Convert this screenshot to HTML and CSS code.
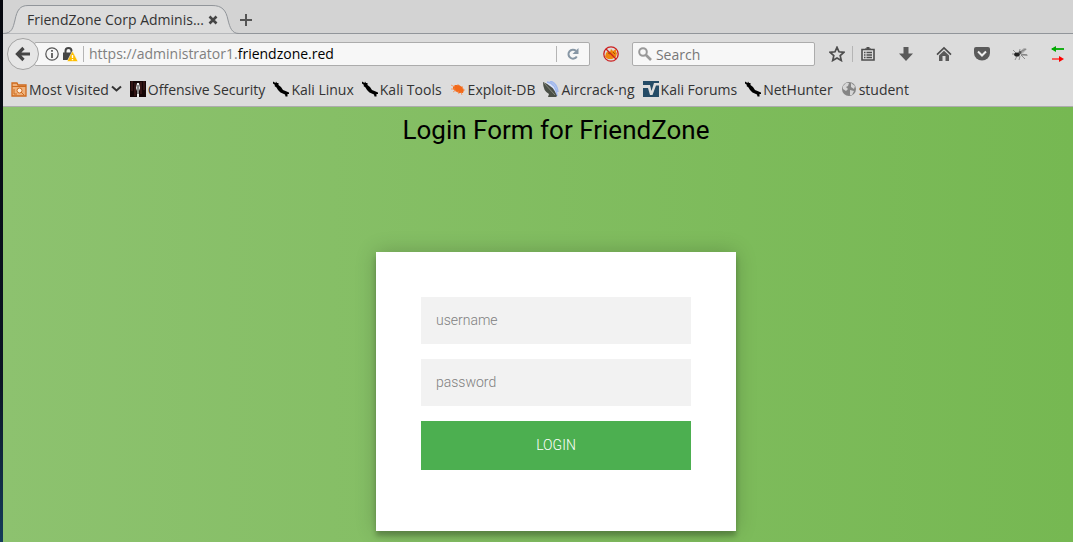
FILE: index.html
```html
<!DOCTYPE html>
<html lang="en">
<head>
    <title>FriendZone Corp Administration</title>
    <meta charset="UTF-8">
    <meta name="viewport" content="width=device-width, initial-scale=1.0">
    <link rel="stylesheet" href="styles.css">
</head>
<body>
    <svg class="defs" width="0" height="0" aria-hidden="true">
        <symbol id="kali" viewBox="0 0 16 16">
            <path d="M0 .5l2.500 1.500L3 .5 4 2l1.500 0v2L8 6l2 3 2.500 1 3.500 1.500.5 1.500-2 0 0 2.500-2 0-.5-2L7.500 11.500 5 9 3.500 6.500 1.500 5 2 4 0 2.500z" fill="#000"/>
        </symbol>
    </svg>
    <div class="browser">
        <header class="tab-bar">
            <div class="tab">
                <svg class="tab-shape" viewBox="0 0 236 29" preserveAspectRatio="none" aria-hidden="true">
                    <path d="M0 28.5C9 28.5 10 23 12 15C14 5 17 .5 25 .5H209C219 .5 223 5 225 15C227 23 229 28.5 236 28.5" fill="#dcdcdc" stroke="#91959a"/>
                </svg>
                <span class="tab-title">FriendZone Corp Adminis...</span>
                <button class="icon-btn tab-close" type="button" aria-label="Close tab">
                    <svg width="10" height="10" viewBox="0 0 10 10"><path d="M1.500 1.500l7 7M8.500 1.500l-7 7" stroke="#454545" stroke-width="2.600"/></svg>
                </button>
            </div>
            <button class="icon-btn new-tab" type="button" aria-label="New tab">
                <svg width="14" height="14" viewBox="0 0 14 14"><path d="M7 1v12M1 7h12" stroke="#555" stroke-width="2"/></svg>
            </button>
        </header>

        <nav class="toolbar">
            <button class="back" type="button" aria-label="Back">
                <svg width="16" height="16" viewBox="0 0 16 16"><path d="M8.500 2L2.500 8l6 6M3 8h12" fill="none" stroke="#454545" stroke-width="3.200"/></svg>
            </button>
            <div class="url-bar">
                <svg width="14" height="14" viewBox="0 0 14 14"><circle cx="7" cy="7" r="6.200" fill="none" stroke="#555" stroke-width="1.200"/><path d="M7 6v5M7 3v1.700" stroke="#454545" stroke-width="1.600"/></svg>
                <svg width="15" height="15" viewBox="0 0 15 15"><path d="M2.500 6V4a3 3 0 0 1 6 0v2" fill="none" stroke="#454545" stroke-width="2"/><path d="M0 5.500h10V13H0z" fill="#454545"/><path d="M9.500 4L15 14.500H4z" fill="#ffbf00" stroke="#f7f7f7" stroke-width=".6"/><path d="M9.500 8v3M9.500 12v1.300" stroke="#fff" stroke-width="1.400"/></svg>
                <span class="url"><a href="#">https://administrator1.<b>friendzone.red</b></a></span>
                <button class="icon-btn reload" type="button" aria-label="Reload">
                    <svg width="14" height="14" viewBox="0 0 14 14"><path d="M10.800 9.500A4.500 4.500 0 1 1 10 3.800" fill="none" stroke="#8797a5" stroke-width="2"/><path d="M12.500 1v6h-6z" fill="#8797a5"/></svg>
                </button>
            </div>
            <button class="icon-btn blocker" type="button" aria-label="Blocker">
                <svg width="16" height="16" viewBox="0 0 16 16"><path d="M3 7l2-2 2 1 1-3 2 2 3-2v3l1 1-1 4-4 2H5L2 11z" fill="#ef8510"/><path d="M5 7l2 1M10 6l2 2" stroke="#9c5500"/><circle cx="8" cy="8" r="7.200" fill="none" stroke="#cc2020" stroke-width="1.300"/><path d="M3 3l10 10" stroke="#cc2020" stroke-width="1.300"/></svg>
            </button>
            <label class="search-bar">
                <svg width="14" height="14" viewBox="0 0 14 14"><circle cx="5" cy="5" r="3.800" fill="none" stroke="#999" stroke-width="2"/><path d="M8 8l5 5" stroke="#999" stroke-width="2.600"/></svg>
                <input type="text" placeholder="Search" aria-label="Search">
            </label>
            <div class="tools">
                <button class="icon-btn star" type="button" aria-label="Bookmark">
                    <svg width="16" height="16" viewBox="0 0 16 16"><path d="M8 1.300l2 4.500 4.900.5-3.700 3.300 1.100 4.900L8 12l-4.300 2.500 1.100-4.900L1.100 6.300 6 5.800z" fill="none" stroke="#4d4d4d" stroke-width="1.700"/></svg>
                </button>
                <button class="icon-btn" type="button" aria-label="Bookmarks list">
                    <svg width="16" height="16" viewBox="0 0 16 16"><path d="M2 3.500h12v10.500H2z" fill="none" stroke="#4d4d4d" stroke-width="1.600"/><path d="M5 4V2.500h1.500V1h3v1.500H11V4z" fill="#4d4d4d"/><path d="M4 6.500h1.500M6.500 6.500H12M4 9h1.500M6.500 9H12M4 11.500h1.500M6.500 11.500H12" stroke="#4d4d4d" stroke-width="1.300"/></svg>
                </button>
                <button class="icon-btn" type="button" aria-label="Downloads">
                    <svg width="16" height="16" viewBox="0 0 16 16"><path d="M5.500 1h5v6.500H15l-7 7.500-7-7.500h4.500z" fill="#5a5a5a"/></svg>
                </button>
                <button class="icon-btn" type="button" aria-label="Home">
                    <svg width="16" height="16" viewBox="0 0 16 16"><path d="M1 8.700l7-6.700 7 6.700" fill="none" stroke="#4d4d4d" stroke-width="1.700"/><path d="M8 4.800l5 4.700v5.500H9.500v-5h-3v5H3V9.500z" fill="#5a5a5a"/></svg>
                </button>
                <button class="icon-btn" type="button" aria-label="Pocket">
                    <svg width="16" height="16" viewBox="0 0 16 16"><path d="M2 1h12q2 0 2 2v4a8 7.500 0 0 1-16 0V3q0-2 2-2z" fill="#5a5a5a"/><path d="M4 5.500l4 4 4-4" fill="none" stroke="#eee" stroke-width="2"/></svg>
                </button>
                <button class="icon-btn" type="button" aria-label="Fly">
                    <svg width="16" height="16" viewBox="0 0 16 16"><path d="M7 6l5-4 3 1-4 4zM8 8l7 0 1 2-6 0z" fill="#aaa"/><path d="M1 4l3 3M0 8h4M3 14l2-4M7 14l1-4M8 3L7 7M9 9l4 4M8 6l6-3M9 8l6 1" stroke="#777" stroke-width=".8"/><ellipse cx="5" cy="8.500" rx="2.800" ry="2" fill="#222"/><circle cx="8" cy="6.500" r="1.500" fill="#555"/></svg>
                </button>
                <button class="icon-btn" type="button" aria-label="Proxy">
                    <svg width="16" height="16" viewBox="0 0 16 16"><path d="M2 3h12" stroke="#0a0" stroke-width="1.800"/><path d="M1 3l5-3v6z" fill="#0a0"/><path d="M2 13h10" stroke="#f33" stroke-width="1.500"/><path d="M14 13l-5-3v6z" fill="#f00"/></svg>
                </button>
            </div>
        </nav>

        <nav class="bookmarks">
            <a href="#">
                <svg width="16" height="16" viewBox="0 0 16 16"><path d="M1 2h5l1 2h8v11H1z" fill="#efb27c" stroke="#ce6a1c" stroke-width="1.300"/><path d="M1 5.500h14" stroke="#ce6a1c"/><circle cx="8.500" cy="9.500" r="2.500" fill="#fff0df" stroke="#ce6a1c"/><path d="M10 11l3 3M3 8v5h3" fill="none" stroke="#ce6a1c"/></svg>
                Most Visited
                <svg width="11" height="8" viewBox="0 0 11 8"><path d="M1 1.500l4.500 4 4.500-4" fill="none" stroke="#333" stroke-width="2"/></svg>
            </a>
            <a href="#">
                <svg width="16" height="16" viewBox="0 0 16 16"><path d="M0 0h16v16H0z" fill="#150606"/><path d="M2 0v10M5 2v13M11 1v12M14 0v9" stroke="#532222"/><path d="M7 2h2l1 5-1 3v6H7v-6L6 7z" fill="#eee"/><path d="M8 4v9" stroke="#222"/></svg>
                Offensive Security
            </a>
            <a href="#"><svg width="16" height="16"><use href="#kali"/></svg>Kali Linux</a>
            <a href="#"><svg width="16" height="16"><use href="#kali"/></svg>Kali Tools</a>
            <a href="#">
                <svg width="16" height="16" viewBox="0 0 16 16"><path d="M3 6l2-2 4 0 3 2 2 3-1 3-4 0-4-2-2-2z" fill="#f26a1b"/><path d="M1 4l4 2M1 8h4M3 11l3-2M8 3v2M12 5l1 3M13 9h2M11 11l1 3M8 10l1 3" stroke="#f58a4c" stroke-width=".8"/></svg>
                Exploit-DB
            </a>
            <a href="#">
                <svg width="16" height="16" viewBox="0 0 16 16"><path d="M3 1q11 0 12 14l-5-1z" fill="#dbe4fa"/><path d="M4 1q9 1 10 14M7 0q7 2 8 11" fill="none" stroke="#a0b8ee" stroke-width="1.500"/><path d="M0 1q0 9 6 12l-1 3h8l1-1Q11 5 0 1z" fill="#4a4f47"/><path d="M1 2l11 12" stroke="#85897d"/></svg>
                Aircrack-ng
            </a>
            <a href="#">
                <svg width="16" height="16" viewBox="0 0 16 16"><path d="M0 0h16v16H0z" fill="#244b66"/><path d="M0 4h7l1.500 6L11 2h5v2.500h-3L9.500 14H7L5 7H0z" fill="#ddd"/></svg>
                Kali Forums
            </a>
            <a href="#"><svg width="16" height="16"><use href="#kali"/></svg>NetHunter</a>
            <a href="#">
                <svg width="16" height="16" viewBox="0 0 16 16"><circle cx="8" cy="8" r="7" fill="#858585"/><path d="M2 5l3-3 3 0-1 3-2 1 2 2-2 2-3-2zM10 2l4 3-1 3-3-2zM9 9l4 1-2 4-2 0z" fill="#d6d6d6"/></svg>
                student
            </a>
        </nav>

        <main class="page">
            <h2>Login Form for FriendZone</h2>
            <form class="form">
                <input type="text" name="username" placeholder="username" aria-label="username">
                <input type="password" name="password" placeholder="password" aria-label="password">
                <button type="submit">Login</button>
            </form>
        </main>
    </div>
</body>
</html>
```

FILE: styles.css
```css
:root {
    --chrome: #dcdcdc;
    --chrome-dark: #d3d3d3;
    --line: #acacac;
    --text: #333;
}

* {
    box-sizing: border-box;
}

body {
    margin: 0;
    padding-left: 3px;
    background: linear-gradient(#05070d 0%, #0b1424 70%, #153c5a 100%);
    font-family: "Open Sans", "Noto Sans", sans-serif;
    font-size: 14px;
    color: var(--text);
}

svg {
    display: block;
    flex: none;
}

.defs {
    position: absolute;
}

.browser {
    display: flex;
    flex-direction: column;
    min-height: 100vh;
    background: var(--chrome);
}

.icon-btn {
    padding: 0;
    border: none;
    background: none;
    cursor: pointer;
}

/* tabs */
.tab-bar {
    display: flex;
    align-items: flex-end;
    height: 34px;
    background: var(--chrome-dark);
    border-bottom: 1px solid #91959a;
}

.tab {
    position: relative;
    display: flex;
    align-items: center;
    width: 236px;
    height: 29px;
    padding: 0 21px 0 24px;
    margin-bottom: -1px;
}

.tab-shape {
    position: absolute;
    inset: 0;
    width: 100%;
    height: 100%;
}

.tab-title,
.tab-close {
    position: relative;
}

.tab-title {
    flex: 1;
    white-space: nowrap;
}

.new-tab {
    padding: 0 0 6px;
}

/* address bar */
.toolbar {
    display: flex;
    align-items: center;
    height: 40px;
    padding: 0 7px 0 4px;
}

.back {
    position: relative;
    display: flex;
    align-items: center;
    justify-content: center;
    width: 32px;
    height: 32px;
    padding: 0;
    border: 1px solid #a3a3a3;
    border-radius: 50%;
    background: #e6e6e6;
}

.url-bar,
.search-bar {
    display: flex;
    align-items: center;
    height: 24px;
    border: 1px solid var(--line);
    border-radius: 2px;
    background: #f7f7f7;
}

.url-bar {
    flex: 556;
    gap: 4px;
    margin-left: -5px;
    padding-left: 10px;
}

.url {
    flex: 1;
    margin-left: 1px;
    padding-left: 5px;
    border-left: 1px solid #b5b5b5;
    line-height: 16px;
}

.url a {
    color: #808080;
    text-decoration: none;
}

.url b {
    color: #000;
    font-weight: 400;
}

.reload {
    padding: 1px 9px;
    border-left: 1px solid #b5b5b5;
}

.blocker {
    margin: 0 13px;
}

.search-bar {
    flex: 180;
    min-width: 0;
    gap: 4px;
    padding-left: 5px;
}

.search-bar input {
    flex: 1;
    min-width: 0;
    padding: 0;
    border: none;
    outline: none;
    background: none;
    font: inherit;
}

.search-bar input::placeholder {
    color: #777;
}

.tools {
    display: flex;
    gap: 22px;
    margin-left: 14px;
}

.star {
    margin-right: -15px;
    padding-right: 7px;
    border-right: 1px solid #b5b5b5;
}

/* bookmarks */
.bookmarks {
    display: flex;
    align-items: center;
    gap: 8px;
    height: 33px;
    padding: 0 8px 2px;
    border-bottom: 1px solid var(--line);
}

.bookmarks a {
    display: flex;
    align-items: center;
    gap: 2px;
    color: var(--text);
    text-decoration: none;
    white-space: nowrap;
}

.bookmarks a:hover {
    text-decoration: underline;
}

/* login page */
.page {
    flex: 1;
    padding: 8px 0 11px 36px;
    background: linear-gradient(to left, #76b852, #8dc26f);
    font-family: Roboto, sans-serif;
}

.page h2 {
    margin: 0 0 107px;
    color: #000;
    font-size: 26px;
    font-weight: 400;
    line-height: 30px;
    text-align: center;
}

.form {
    max-width: 360px;
    margin: 0 auto;
    padding: 45px 45px 61px;
    background: #fff;
    box-shadow: 0 0 20px 0 rgba(0, 0, 0, 0.2), 0 5px 5px 0 rgba(0, 0, 0, 0.24);
    text-align: center;
}

.form input {
    display: block;
    width: 100%;
    margin: 0 0 15px;
    padding: 15px;
    border: 0;
    outline: 0;
    background: #f2f2f2;
    font-family: Roboto, sans-serif;
    font-size: 14px;
    font-weight: 300;
    line-height: 17px;
}

.form input::placeholder {
    color: #808080;
}

.form button {
    width: 100%;
    padding: 16px;
    border: 0;
    background: #4caf50;
    color: #fff;
    font-family: Roboto, sans-serif;
    font-size: 14px;
    font-weight: 300;
    line-height: 17px;
    text-transform: uppercase;
    cursor: pointer;
}

.form button:hover {
    background: #43a047;
}
```
